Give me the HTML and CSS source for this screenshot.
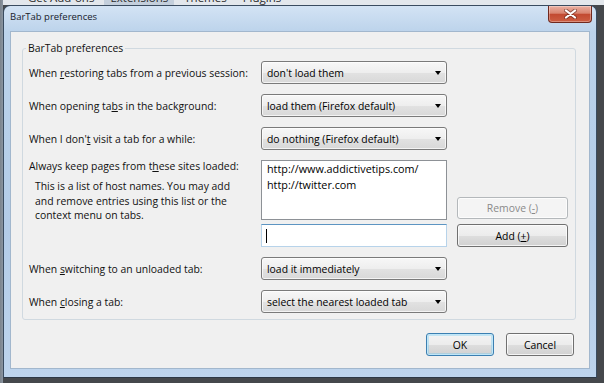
FILE: index.html
```html
<!DOCTYPE html>
<html lang="en">
  <head>
    <meta charset="UTF-8" />
    <title>BarTab preferences</title>
    <link rel="stylesheet" href="styles.css">
  </head>
  <body>
    <div class="desk">
      <!-- bottom of the add-ons manager behind the dialog -->
      <div class="parentTabs">
        <span>Get Add-ons</span>
        <span class="current">Extensions</span>
        <span>Themes</span>
        <span>Plugins</span>
      </div>

      <div class="window">
        <div class="titlebar">
          <span class="title">BarTab preferences</span>
          <div class="close">
            <svg width="13" height="10" viewBox="0 0 13 10">
              <path d="M2 1.5 L11 8.5 M11 1.5 L2 8.5" stroke="#5b2118" stroke-width="4" stroke-linecap="round" opacity="0.55" />
              <path d="M2 1.5 L11 8.5 M11 1.5 L2 8.5" stroke="#fff" stroke-width="2.2" stroke-linecap="round" />
            </svg>
          </div>
        </div>

        <div class="client">
          <fieldset class="group">
            <legend>BarTab preferences</legend>
            <div class="prefs">
              <label>When <u>r</u>estoring tabs from a previous session:</label>
              <div class="combo"><span>don't load them</span><i class="arrow"></i></div>
              <div></div>

              <label>When opening ta<u>b</u>s in the background:</label>
              <div class="combo"><span>load them (Firefox default)</span><i class="arrow"></i></div>
              <div></div>

              <label>When I don'<u>t</u> visit a tab for a while:</label>
              <div class="combo"><span>do nothing (Firefox default)</span><i class="arrow"></i></div>
              <div></div>

              <div class="keep">
                <label>Always keep pages from t<u>h</u>ese sites loaded:</label>
                <p class="hint">This is a list of host names. You may add<br>and remove entries using this list or the<br>context menu on tabs.</p>
              </div>
              <div class="hostBox">
                <div class="listbox">
                  <div>http://www.addictivetips.com/</div>
                  <div>http://twitter.com</div>
                </div>
                <div class="textbox"><i class="caret"></i></div>
              </div>
              <div class="hostButtons">
                <button class="btn disabled">Remove (<u>-</u>)</button>
                <button class="btn add">Add (<u>+</u>)</button>
              </div>

              <label>When <u>s</u>witching to an unloaded tab:</label>
              <div class="combo"><span>load it immediately</span><i class="arrow"></i></div>
              <div></div>

              <label>When <u>c</u>losing a tab:</label>
              <div class="combo"><span>select the nearest loaded tab</span><i class="arrow"></i></div>
              <div></div>
            </div>
          </fieldset>

          <div class="dialogButtons">
            <button class="btn default">OK</button>
            <button class="btn">Cancel</button>
          </div>
        </div>
      </div>
    </div>
  </body>
</html>
```

FILE: styles.css
```css
* {
  box-sizing: border-box;
}
body {
  margin: 0;
  background-color: #4b4f54;
  font-family: "Open Sans", "Noto Sans", sans-serif;
  font-size: 10.4px;
  color: #111;
}
.desk {
  width: 604px;
  height: 383px;
  overflow: hidden;
  background: linear-gradient(90deg, #7b838c 0, #8a95a1 3px, #45484c 3px);
}

.parentTabs {
  height: 5px;
  margin-left: 3px;
  padding-left: 19px;
  display: flex;
  gap: 4px;
  overflow: hidden;
  background-color: #e3e7ec;
  font-size: 11.5px;
  line-height: 14px;
  color: #2a2a2a;
}
.parentTabs span {
  margin-top: -9px;
  padding: 0 6px;
}
.parentTabs .current {
  background-color: #c4cfdc;
}

.window {
  width: 594px;
  height: 373px;
  margin-left: 3px;
  padding: 0 6px 8px;
  display: flex;
  flex-direction: column;
  border: 1px solid #3a4c60;
  border-bottom-color: #2c3846;
  border-radius: 7px 7px 0 0;
  background: linear-gradient(180deg, #d3e3f4 0, #bcd3eb 26px, #b3cce8 60%, #bdd4ed 100%);
}

.titlebar {
  height: 25px;
  margin-right: -2px;
  display: flex;
  justify-content: space-between;
  align-items: flex-start;
}
.title {
  font-size: 9.5px;
  line-height: 22px;
  color: #18212c;
}
.close {
  width: 44px;
  height: 17px;
  display: flex;
  justify-content: center;
  align-items: center;
  border: 1px solid #70291e;
  border-top: none;
  border-radius: 0 0 4px 4px;
  background: linear-gradient(180deg, #ebb0a2 0, #d98470 45%, #c24a31 52%, #cd5e43 100%);
  box-shadow: inset 0 0 0 1px rgba(255, 255, 255, 0.3);
}

.client {
  flex: 1;
  display: flex;
  flex-direction: column;
  padding: 8px 13px 0 11px;
  background-color: #f0f0f0;
  border: 1px solid #a2b7cd;
}

.group {
  margin: 0;
  padding: 5px 6px 6px;
  border: 1px solid #d0d9e0;
  border-radius: 3px;
}
.group legend {
  margin-left: -3px;
  padding: 0 2px;
  line-height: 16px;
}

.prefs {
  display: grid;
  grid-template-columns: 222px 186px 111px;
  column-gap: 10px;
  row-gap: 10px;
  align-items: center;
}
u {
  text-underline-offset: 1px;
}

.combo {
  height: 23px;
  padding: 0 5px 0 5px;
  display: flex;
  justify-content: space-between;
  align-items: center;
  color: #000;
  border: 1px solid #7a7a7a;
  border-radius: 3px;
  background: linear-gradient(180deg, #f7f7f7 0, #eeeeee 50%, #e2e2e2 51%, #d8d8d8 100%);
  box-shadow: inset 0 0 0 1px rgba(255, 255, 255, 0.7);
}
.arrow {
  width: 0;
  height: 0;
  border-left: 3.5px solid transparent;
  border-right: 3.5px solid transparent;
  border-top: 4px solid #000;
}

.keep {
  align-self: start;
  margin-top: -2px;
}
.keep label {
  display: block;
  line-height: 16px;
}
.hint {
  margin: 5px 0 0 6px;
  line-height: 14.5px;
}

.hostBox {
  display: flex;
  flex-direction: column;
  gap: 4px;
}
.listbox {
  height: 60px;
  padding: 0 5px;
  font-size: 10.8px;
  line-height: 16px;
  color: #000;
  background-color: #fff;
  border: 1px solid #8d9196;
}
.textbox {
  height: 23px;
  padding: 0 4px;
  display: flex;
  align-items: center;
  background-color: #fff;
  border: 1px solid #b7d3ea;
  border-top-color: #5d95c2;
}
.caret {
  width: 1px;
  height: 14px;
  background-color: #000;
}

.hostButtons {
  align-self: stretch;
  display: flex;
  flex-direction: column;
  justify-content: flex-end;
  gap: 5px;
}

.btn {
  height: 23px;
  padding: 0;
  font-family: inherit;
  font-size: inherit;
  color: #000;
  border: 1px solid #707070;
  border-radius: 3px;
  background: linear-gradient(180deg, #f4f4f4 0, #ececec 50%, #dedede 51%, #d1d1d1 100%);
  box-shadow: inset 0 0 0 1px rgba(255, 255, 255, 0.75);
}
.btn.disabled {
  height: 22px;
  color: #8a8a8a;
  border-color: #b4b8bb;
  background: #f4f4f4;
}
.btn.default {
  border-color: #3c7fb1;
  box-shadow: inset 0 0 0 1px #bfe6f8, inset 0 0 0 2px rgba(110, 200, 240, 0.35);
}

.dialogButtons {
  margin-top: 13px;
  padding-right: 2px;
  display: flex;
  justify-content: flex-end;
  gap: 12px;
}
.dialogButtons .btn {
  width: 68px;
}
```
